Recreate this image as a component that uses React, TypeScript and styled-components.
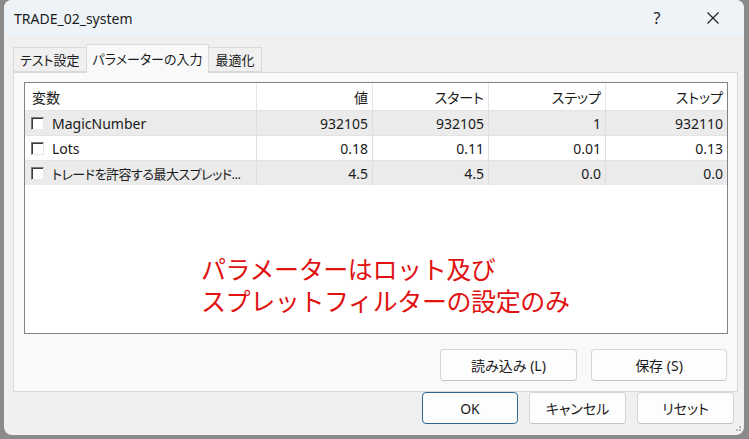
import styled, { createGlobalStyle } from "styled-components";

interface Param {
  name: string;
  value: string;
  start: string;
  step: string;
  stop: string;
  tight?: boolean;
}

const PARAMS: Param[] = [
  { name: "MagicNumber", value: "932105", start: "932105", step: "1", stop: "932110" },
  { name: "Lots", value: "0.18", start: "0.11", step: "0.01", stop: "0.13" },
  { name: "トレードを許容する最大スプレッド...", value: "4.5", start: "4.5", step: "0.0", stop: "0.0", tight: true },
];

const TABS = ["テスト設定", "パラメーターの入力", "最適化"];

const GlobalStyle = createGlobalStyle`
  html, body {
    margin: 0;
    padding: 0;
    background: #8a8a8a;
  }
  #root {
    height: 439px;
  }
  * {
    box-sizing: border-box;
  }
`;

const App = () => {
  return <>
    <GlobalStyle />
    <Window>
      <TitleBar>
        <Title>TRADE_02_system</Title>
        <TitleButtons>
          <Help>?</Help>
          <Close>
            <svg width="14" height="14" viewBox="0 0 14 14">
              <path d="M1.5 1.5 L12.5 12.5 M12.5 1.5 L1.5 12.5" stroke="#1f1f1f" strokeWidth="1.2" fill="none" />
            </svg>
          </Close>
        </TitleButtons>
      </TitleBar>
      <Body>
        <TabStrip>
          {TABS.map((t, i) => <Tab key={t} $active={i === 1}>{t}</Tab>)}
        </TabStrip>
        <Panel>
          <ListView>
            <HeaderRow>
              <HeadCell $left>変数</HeadCell>
              <HeadCell>値</HeadCell>
              <HeadCell>スタート</HeadCell>
              <HeadCell>ステップ</HeadCell>
              <HeadCell $last>ストップ</HeadCell>
            </HeaderRow>
            {PARAMS.map((p, i) => (
              <Row key={p.name} $shade={i % 2 === 0}>
                <NameCell>
                  <CheckBox />
                  <NameText $tight={p.tight}>{p.name}</NameText>
                </NameCell>
                <Cell>{p.value}</Cell>
                <Cell>{p.start}</Cell>
                <Cell>{p.step}</Cell>
                <Cell $last>{p.stop}</Cell>
              </Row>
            ))}
            <Note>
              <NoteLine>パラメーターはロット及び</NoteLine>
              <NoteLine>スプレットフィルターの設定のみ</NoteLine>
            </Note>
          </ListView>
          <PanelButtons>
            <Button $w={137}>読み込み (L)</Button>
            <Button $w={136}>保存 (S)</Button>
          </PanelButtons>
        </Panel>
        <DialogButtons>
          <Button $w={96} $focus>OK</Button>
          <Button $w={97}>キャンセル</Button>
          <Button $w={97}>リセット</Button>
        </DialogButtons>
      </Body>
      <Grip>
        <svg width="7" height="7" viewBox="0 0 7 7">
          <rect x="4" y="0" width="2" height="2" fill="#b5b5b5" />
          <rect x="1" y="3" width="2" height="2" fill="#b5b5b5" />
          <rect x="4" y="3" width="2" height="2" fill="#b5b5b5" />
        </svg>
      </Grip>
    </Window>
  </>;
}

export default App;

const Window = styled.div`
  position: relative;
  margin: 0 5px 0 4px;
  height: 435px;
  border-radius: 8px;
  overflow: hidden;
  background: #f0f0f0;
  display: flex;
  flex-direction: column;
  font-family: "Noto Sans", "Noto Sans CJK JP", sans-serif;
  font-feature-settings: "palt";
  color: #1a1a1a;
`
const TitleBar = styled.div`
  height: 35px;
  flex-shrink: 0;
  background: #eef3f8;
  display: flex;
  align-items: center;
  justify-content: space-between;
  padding: 0 0 0 10px;
`
const Title = styled.div`
  font-size: 14px;
  color: #1b1b1b;
  padding-top: 1px;
`
const TitleButtons = styled.div`
  display: flex;
  align-items: center;
  height: 100%;
`
const Help = styled.div`
  width: 56px;
  text-align: center;
  font-size: 16px;
  color: #222;
`
const Close = styled.div`
  width: 56px;
  margin-right: 3px;
  display: flex;
  justify-content: center;
  align-items: center;
`
const Body = styled.div`
  flex-grow: 1;
  display: flex;
  flex-direction: column;
  padding: 10px 6px 0 9px;
`
const TabStrip = styled.div`
  display: flex;
  align-items: flex-end;
  height: 28px;
  position: relative;
  z-index: 1;
  margin-bottom: -1px;
`
const Tab = styled.div<{ $active?: boolean }>`
  height: ${p => p.$active ? "29px" : "25px"};
  margin-bottom: ${p => p.$active ? "0" : "1px"};
  padding: ${p => p.$active ? "0 6px 2px 6px" : "0 6px"};
  display: flex;
  align-items: center;
  font-size: 13px;
  color: #1a1a1a;
  background: ${p => p.$active ? "#f9f9f9" : "#f0f0f0"};
  border: 1px solid #dadada;
  border-bottom: ${p => p.$active ? "none" : "1px solid #dadada"};
  margin-left: ${p => p.$active ? "-1px" : "0"};
  margin-right: ${p => p.$active ? "-1px" : "0"};
`
const Panel = styled.div`
  height: 320px;
  background: #f9f9f9;
  border: 1px solid #dadada;
  padding: 9px 9px 10px 10px;
  display: flex;
  flex-direction: column;
`
const ListView = styled.div`
  height: 252px;
  flex-shrink: 0;
  background: #fff;
  border: 1px solid #828282;
  display: flex;
  flex-direction: column;
`
const HeaderRow = styled.div`
  display: grid;
  grid-template-columns: 232px 116px 116px 117px 1fr;
  height: 27px;
`
const HeadCell = styled.div<{ $left?: boolean; $last?: boolean }>`
  display: flex;
  align-items: center;
  justify-content: ${p => p.$left ? "flex-start" : "flex-end"};
  padding: ${p => p.$left ? "0 0 0 7px" : "0 4px 0 0"};
  border-right: ${p => p.$last ? "none" : "1px solid #e5e5e5"};
  font-size: 14px;
  color: #1a1a1a;
`
const Row = styled.div<{ $shade?: boolean }>`
  display: grid;
  grid-template-columns: 232px 116px 116px 117px 1fr;
  height: 25px;
  background: ${p => p.$shade ? "#ebebeb" : "#ffffff"};
  border-top: 1px solid #e3e3e3;
`
const Cell = styled.div<{ $last?: boolean }>`
  display: flex;
  align-items: center;
  justify-content: flex-end;
  padding-right: 4px;
  font-size: 14px;
  border-right: ${p => p.$last ? "none" : "1px solid #dedede"};
`
const NameCell = styled.div`
  display: flex;
  align-items: center;
  padding: 0 4px 0 6px;
  border-right: 1px solid #dedede;
  overflow: hidden;
  min-width: 0;
`
const CheckBox = styled.span`
  width: 13px;
  height: 13px;
  flex-shrink: 0;
  background: #fff;
  border: 1px solid;
  border-color: #7a7a7a #e8e8e8 #e8e8e8 #7a7a7a;
  box-shadow: inset 1px 1px 0 #3c3c3c;
`
const NameText = styled.span<{ $tight?: boolean }>`
  margin-left: 8px;
  font-size: ${p => p.$tight ? "13px" : "14px"};
  letter-spacing: ${p => p.$tight ? "-0.5px" : "0"};
  white-space: nowrap;
`
const Note = styled.div`
  margin: 68px 0 0 176px;
  display: flex;
  flex-direction: column;
  color: #e01212;
  font-feature-settings: normal;
`
const NoteLine = styled.div`
  font-size: 25px;
  line-height: 32px;
  letter-spacing: -0.4px;
  white-space: nowrap;
`
const PanelButtons = styled.div`
  display: flex;
  justify-content: flex-end;
  gap: 14px;
  margin-top: 15px;
  padding-right: 1px;
`
const DialogButtons = styled.div`
  display: flex;
  justify-content: flex-end;
  gap: 11px;
  padding: 0 4px 0 0;
  margin-top: 0;
`
const Button = styled.button<{ $w: number; $focus?: boolean }>`
  width: ${p => p.$w}px;
  height: 32px;
  background: #fdfdfd;
  border: 1px solid ${p => p.$focus ? "#2f6690" : "#d6d6d6"};
  border-bottom-color: ${p => p.$focus ? "#2f6690" : "#c4c4c4"};
  border-radius: 4px;
  font-family: "Noto Sans", "Noto Sans CJK JP", sans-serif;
  font-feature-settings: "palt";
  font-size: 14px;
  color: #1a1a1a;
  padding: 0;
`
const Grip = styled.div`
  position: absolute;
  right: 2px;
  bottom: 2px;
  display: flex;
`
